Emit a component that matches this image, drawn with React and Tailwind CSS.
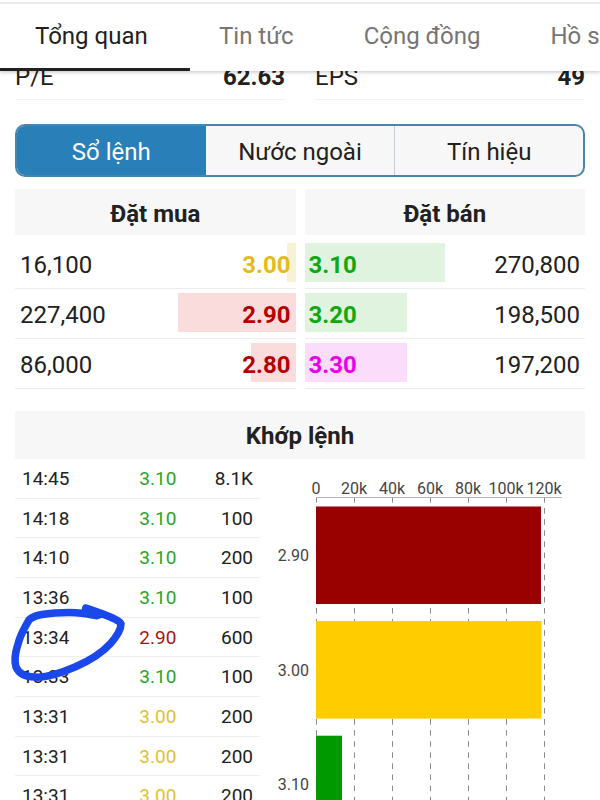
const TABS = [
  { label: "Tổng quan", className: "w-[190px] pl-[35px] text-[#212121]" },
  { label: "Tin tức", className: "pl-[29px] pr-[35px] text-[#757575]" },
  { label: "Cộng đồng", className: "px-[35px] text-[#757575]" },
  { label: "Hồ sơ", className: "px-[35px] text-[#757575]" },
]

const BIDS = [
  { price: "3.00", volume: 16100, text: "text-[#e3bb1c]", bar: "bg-[#f8f2d4]" },
  { price: "2.90", volume: 227400, text: "text-[#b50000]", bar: "bg-[#fbdcdc]" },
  { price: "2.80", volume: 86000, text: "text-[#b50000]", bar: "bg-[#fbdcdc]" },
]

const ASKS = [
  { price: "3.10", volume: 270800, text: "text-[#0fa80f]", bar: "bg-[#dff3df]" },
  { price: "3.20", volume: 198500, text: "text-[#0fa80f]", bar: "bg-[#dff3df]" },
  { price: "3.30", volume: 197200, text: "text-[#e800e8]", bar: "bg-[#fbdcfb]" },
]

const MAX_VOLUME = 270800

const UP = "text-[#2aa52a]"
const DOWN = "text-[#a81414]"
const FLAT = "text-[#dfbf30]"

const TRADES = [
  { time: "14:45", price: "3.10", volume: "8.1K", color: UP },
  { time: "14:18", price: "3.10", volume: "100", color: UP },
  { time: "14:10", price: "3.10", volume: "200", color: UP },
  { time: "13:36", price: "3.10", volume: "100", color: UP },
  { time: "13:34", price: "2.90", volume: "600", color: DOWN },
  { time: "13:33", price: "3.10", volume: "100", color: UP },
  { time: "13:31", price: "3.00", volume: "200", color: FLAT },
  { time: "13:31", price: "3.00", volume: "200", color: FLAT },
  { time: "13:31", price: "3.00", volume: "200", color: FLAT },
]

const TICKS = ["0", "20k", "40k", "60k", "80k", "100k", "120k"]
const BARS = [
  { price: "2.90", width: 225, color: "#990000" },
  { price: "3.00", width: 225.5, color: "#ffcc00" },
  { price: "3.10", width: 26, color: "#009900" },
]

function Stat({ label, value }) {
  return (
    <div className="flex h-[50px] items-center justify-between border-b border-[#f0f0f0] pt-1 text-2xl text-[#212121]">
      <dt>{label}</dt>
      <dd className="font-bold">{value}</dd>
    </div>
  )
}

function OrderTable({ title, rows, side }) {
  const isBid = side === "bid"

  return (
    <div>
      <h2 className="mb-1 h-[46px] bg-[#f7f7f7] pt-[9px] text-center text-2xl font-bold">{title}</h2>
      <table className="w-full table-fixed border-separate border-spacing-0 text-2xl">
        <tbody>
          {rows.map((row) => {
            const volume = (
              <td key="volume" className={`border-b border-[#ececec] pt-[2px] ${isBid ? "pl-[5px] text-left" : "pr-[5px] text-right"}`}>
                {row.volume.toLocaleString("en-US")}
              </td>
            )
            const price = (
              <td
                key="price"
                className={`relative border-b border-[#ececec] pt-[2px] font-bold ${row.text} ${isBid ? "pr-[5px] text-right" : "pl-1 text-left"}`}
              >
                <div
                  className={`absolute top-1 bottom-[6px] ${row.bar} ${isBid ? "right-0" : "left-0"}`}
                  style={{ width: `${(row.volume / MAX_VOLUME) * 100}%` }}
                />
                <span className="relative">{row.price}</span>
              </td>
            )
            return (
              <tr key={row.price} className="h-[50px]">
                {isBid ? [volume, price] : [price, volume]}
              </tr>
            )
          })}
        </tbody>
      </table>
    </div>
  )
}

function PriceChart() {
  return (
    <svg viewBox="0 0 309 380" className="w-full" role="img" aria-label="Khối lượng theo giá">
      {TICKS.map((tick, i) => (
        <g key={tick}>
          <line
            x1={40.5 + i * 38}
            x2={40.5 + i * 38}
            y1="38"
            y2="380"
            stroke="#8a8a8a"
            strokeDasharray="5.6 5.5"
          />
          <text x={40 + i * 38} y="35" textAnchor="middle" fontSize="16" fill="#444">
            {tick}
          </text>
        </g>
      ))}
      <path d="M40 38.5H286" stroke="#b5b5b5" />
      {BARS.map((bar, i) => (
        <g key={bar.price}>
          <rect x="40" y={47.5 + i * 114.6} width={bar.width} height="97.5" fill={bar.color} />
          <text x="33" y={102 + i * 114.6} textAnchor="end" fontSize="16" fill="#444">
            {bar.price}
          </text>
        </g>
      ))}
    </svg>
  )
}

function PenCircle() {
  return (
    <svg
      viewBox="0 0 125 85"
      className="pointer-events-none absolute top-[141px] -left-[10px] h-[85px] w-[125px]"
      fill="none"
      stroke="#1a48ea"
      strokeLinecap="round"
      strokeLinejoin="round"
      aria-hidden="true"
    >
      <path
        d="M88 15C76 12 62 12 50 13C38 14 29 15 24 20C18 30 15 36 13 44C10 53 9 60 11 67C14 74 20 77 30 77C40 78 56 73 70 67C84 61 98 52 106 43C112 36 116 30 116 24C114 19 100 15 81 8"
        strokeWidth="7.5"
      />
      <path d="M80 7L78 13L92 17L98 15Z" fill="#1a48ea" strokeWidth="5" />
    </svg>
  )
}

export default function App() {
  return (
    <div className="h-screen overflow-hidden bg-white font-[Roboto,sans-serif] text-[#212121]">
      <header className="relative z-10 overflow-hidden bg-white pt-[2px] shadow-[0_1px_4px_rgba(0,0,0,0.25)]">
        <nav className="flex border-t-2 border-[#ebebeb] text-2xl whitespace-nowrap">
          {TABS.map((tab, i) => (
            <a
              key={tab.label}
              href="#"
              className={`h-[67px] shrink-0 pt-4 ${tab.className} ${i === 0 ? "border-b-[3px] border-[#212121]" : ""}`}
            >
              {tab.label}
            </a>
          ))}
        </nav>
      </header>

      <main className="px-[15px]">
        {/* Row is partly scrolled under the tab bar */}
        <dl className="-mt-[21px] grid grid-cols-2 gap-[30px]">
          <Stat label="P/E" value="62.63" />
          <Stat label="EPS" value="49" />
        </dl>

        <div className="mt-6 grid h-[53px] grid-cols-3 overflow-hidden rounded-[10px] border-2 border-[#4b86aa] bg-[#f7f7f7] text-2xl">
          <button type="button" className="bg-[#2980b9] pt-[3px] text-white">Sổ lệnh</button>
          <button type="button" className="pt-[3px]">Nước ngoài</button>
          <button type="button" className="border-l border-[#c5ced6] pt-[3px]">Tín hiệu</button>
        </div>

        <section className="mt-3 grid grid-cols-2 gap-[9px]">
          <OrderTable title="Đặt mua" rows={BIDS} side="bid" />
          <OrderTable title="Đặt bán" rows={ASKS} side="ask" />
        </section>

        <section className="mt-[22px]">
          <h2 className="h-12 bg-[#f7f7f7] pt-[9px] text-center text-2xl font-bold">Khớp lệnh</h2>
          <div className="relative grid grid-cols-[245fr_309fr] items-start gap-4">
            <table className="h-[357px] w-full table-fixed border-separate border-spacing-0 text-[19px]">
              <tbody>
                {TRADES.map((trade, i) => (
                  <tr key={i}>
                    <td className="border-b border-[#efefef] pt-[2px] pl-[7px]">{trade.time}</td>
                    <td className={`border-b border-[#efefef] pt-[2px] pr-[2px] text-right ${trade.color}`}>{trade.price}</td>
                    <td className="border-b border-[#efefef] pt-[2px] pr-[7px] text-right">{trade.volume}</td>
                  </tr>
                ))}
              </tbody>
            </table>
            <PriceChart />
            <PenCircle />
          </div>
        </section>
      </main>
    </div>
  )
}
